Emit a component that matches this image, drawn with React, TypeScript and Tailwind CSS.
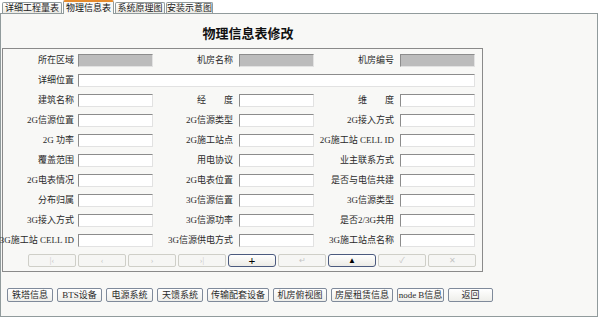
import React from "react";

const font = "font-['Liberation_Serif','Noto_Sans_CJK_SC',serif]";

type Cell = { label: string; gray?: boolean };

const rows: Cell[][] = [
  [{ label: "所在区域", gray: true }, { label: "机房名称", gray: true }, { label: "机房编号", gray: true }],
  [{ label: "详细位置" }],
  [{ label: "建筑名称" }, { label: "经\u3000\u3000度" }, { label: "维\u3000\u3000度" }],
  [{ label: "2G信源位置" }, { label: "2G信源类型" }, { label: "2G接入方式" }],
  [{ label: "2G 功率" }, { label: "2G施工站点" }, { label: "2G施工站 CELL ID" }],
  [{ label: "覆盖范围" }, { label: "用电协议" }, { label: "业主联系方式" }],
  [{ label: "2G电表情况" }, { label: "2G电表位置" }, { label: "是否与电信共建" }],
  [{ label: "分布归属" }, { label: "3G信源信置" }, { label: "3G信源类型" }],
  [{ label: "3G接入方式" }, { label: "3G信源功率" }, { label: "是否2/3G共用" }],
  [{ label: "3G施工站 CELL ID" }, { label: "3G信源供电方式" }, { label: "3G施工站点名称" }],
];

const Input = ({ gray, wide }: { gray?: boolean; wide?: boolean }) => (
  <div
    className={`h-[13px] border border-t-[#8c8c8c] border-l-[#8c8c8c] border-b-[#e2e2e2] border-r-[#e2e2e2] ${
      gray ? "bg-[#bcbcbc]" : "bg-white"
    } ${wide ? "w-[397px]" : "w-[75px]"}`}
  />
);

const Label = ({ text, w }: { text: string; w: string }) => (
  <div className={`${w} flex justify-end whitespace-nowrap text-[9px] leading-none text-[#2a2a2a]`}>{text}</div>
);

const navButtons = [
  { g: "|‹", on: false },
  { g: "‹", on: false },
  { g: "›", on: false },
  { g: "›|", on: false },
  { g: "+", on: true },
  { g: "↵", on: false },
  { g: "▲", on: true },
  { g: "✓", on: false },
  { g: "✕", on: false },
];

const bottomButtons = [
  { t: "铁塔信息", w: "w-[46px]" },
  { t: "BTS设备", w: "w-[45px]" },
  { t: "电源系统", w: "w-[47px]" },
  { t: "天馈系统", w: "w-[46px]" },
  { t: "传输配套设备", w: "w-[62px]" },
  { t: "机房俯视图", w: "w-[54px]" },
  { t: "房屋租赁信息", w: "w-[62px]" },
  { t: "node B信息", w: "w-[47px]" },
  { t: "返回", w: "w-[45px]" },
];

const tabs = [
  { t: "详细工程量表", w: "w-[60px]", active: false },
  { t: "物理信息表", w: "w-[51px]", active: true },
  { t: "系统原理图", w: "w-[50px]", active: false },
  { t: "安装示意图", w: "w-[47px]", active: false },
];

export default function App() {
  return (
    <div className={`w-[600px] h-[319px] bg-white overflow-hidden ${font}`}>
      {/* tab strip */}
      <div className="flex items-end h-[13px] pl-[2px] gap-[1px]">
        {tabs.map((t) =>
          t.active ? (
            <div
              key={t.t}
              className={`${t.w} h-[14px] -mb-[1px] relative z-10 flex items-center justify-center border border-b-0 border-[#919b9c] border-t-2 border-t-[#e68b2c] rounded-t-[2px] bg-[#f8f8f6] text-[9px] leading-none text-[#111]`}
            >
              {t.t}
            </div>
          ) : (
            <div
              key={t.t}
              className={`${t.w} h-[11px] flex items-center justify-center border border-b-0 border-[#919b9c] rounded-t-[2px] bg-gradient-to-b from-white to-[#ecebe5] text-[9px] leading-none text-[#222]`}
            >
              {t.t}
            </div>
          )
        )}
      </div>

      {/* panel */}
      <div className="w-[598px] h-[304px] border border-[#919b9c] bg-[#f8f8f6]">
        <div className="w-[494px] h-[34px] pt-[2px] flex items-center justify-center">
          <span className="font-['Noto_Sans_CJK_SC',sans-serif] text-[13px] font-bold leading-none text-[#111]">
            物理信息表修改
          </span>
        </div>

        <div className="ml-[1px] w-[481px] border border-[#8a8a8a] pt-[1px] pb-[4px]">
          {rows.map((row, i) => (
            <div key={i} className="flex items-center h-[20px]">
              {row.map((c, j) => (
                <React.Fragment key={j}>
                  <Label text={c.label} w={j === 0 ? "w-[71px]" : "w-[80px]"} />
                  <div className={j === 0 ? "ml-[4px]" : "ml-[6px]"}>
                    <Input gray={c.gray} wide={row.length === 1} />
                  </div>
                </React.Fragment>
              ))}
            </div>
          ))}

          <div className="flex gap-[2px] pl-[25px] mt-[4px]">
            {navButtons.map((b, i) =>
              b.on ? (
                <div
                  key={i}
                  className={`w-[48px] h-[13px] flex items-center justify-center rounded-[3px] border border-[#4b5a7e] bg-gradient-to-b from-white to-[#ecebe6] ${
                    b.g === "+" ? "text-[12px]" : "text-[8px]"
                  } font-bold leading-none text-black`}
                >
                  {b.g}
                </div>
              ) : (
                <div
                  key={i}
                  className="w-[48px] h-[13px] flex items-center justify-center rounded-[2px] border border-[#cfcfc8] bg-[#f6f6f4] text-[8px] leading-none text-[#c4c4c4]"
                >
                  {b.g}
                </div>
              )
            )}
          </div>
        </div>

        <div className="flex gap-[4px] pl-[6px] mt-[16px]">
          {bottomButtons.map((b) => (
            <div
              key={b.t}
              className={`${b.w} h-[14px] flex items-center justify-center rounded-[2px] border border-[#7f8a9a] bg-gradient-to-b from-white to-[#eeeeea] text-[9px] leading-none text-[#2a2a2a] whitespace-nowrap`}
            >
              {b.t}
            </div>
          ))}
        </div>
      </div>
    </div>
  );
}
